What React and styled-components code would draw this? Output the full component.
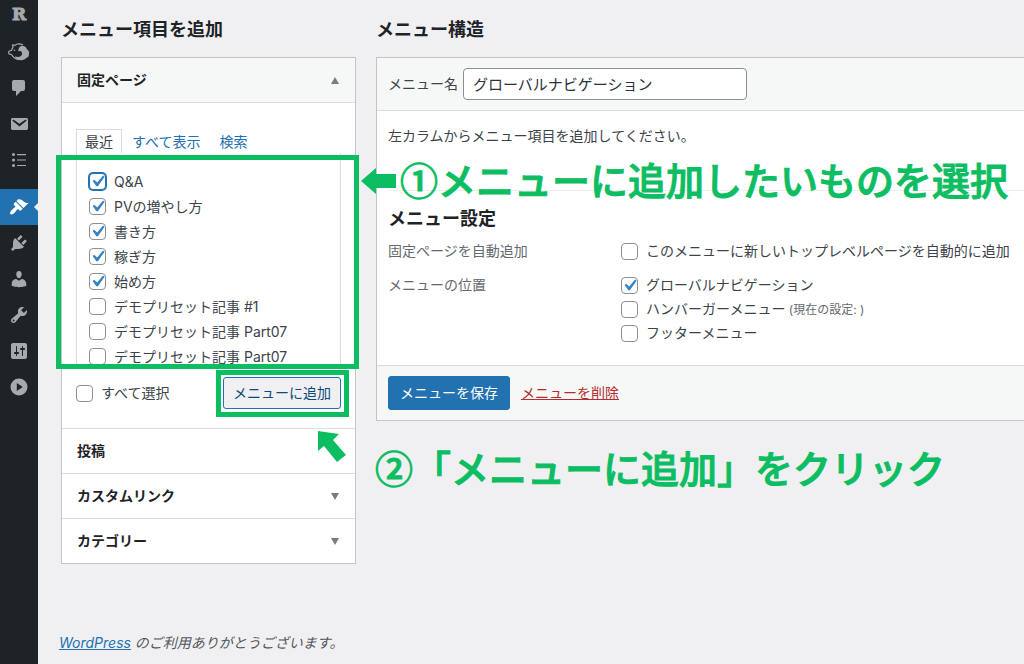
import React, { useState } from "react";
import styled, { createGlobalStyle, css } from "styled-components";

const GREEN = "#0dbd62";

const icons = {
  comments:
    "M5 2h9c1.1 0 2 .9 2 2v7c0 1.1-.9 2-2 2h-2l-5 5v-5H5c-1.1 0-2-.9-2-2V4c0-1.1.9-2 2-2z",
  mail: "M3.87 4h13.25C18.37 4 19 4.59 19 5.79v8.42c0 1.19-.63 1.79-1.88 1.79H3.87c-1.25 0-1.88-.6-1.88-1.79V5.79c0-1.2.63-1.79 1.88-1.79zm6.62 8.6l6.74-5.53c.24-.2.43-.66.13-1.07-.29-.41-.82-.42-1.17-.17l-5.7 3.86L4.8 5.83c-.35-.25-.88-.24-1.17.17-.3.41-.11.87.13 1.07z",
  list: "M4.500 3a1.500 1.500 0 1 1 0 3 1.500 1.500 0 0 1 0-3zM8 4h9v1.200H8zM4.500 8.500a1.500 1.500 0 1 1 0 3 1.500 1.500 0 0 1 0-3zM8 9.400h9v1.200H8zM4.500 14a1.500 1.500 0 1 1 0 3 1.500 1.500 0 0 1 0-3zM8 14.900h9v1.200H8z",
  appearance:
    "M14.48 11.06L7.41 3.99l1.5-1.5c.5-.56 2.3-.47 3.51.32 1.21.8 1.43 1.28 2.91 2.1 1.18.64 2.45 1.26 4.45.85zm-.71.71L6.7 4.7 4.93 6.47c-.39.39-.39 1.02 0 1.41l1.06 1.06c.39.39.39 1.03 0 1.42-.6.6-1.43 1.11-2.21 1.69-.35.26-.7.53-1.01.84C1.43 14.23.4 16.08 1.4 17.07c.99 1 2.84-.03 4.18-1.36.31-.31.58-.66.85-1.02.57-.78 1.08-1.61 1.69-2.21.39-.39 1.02-.39 1.41 0l1.06 1.06c.39.39 1.02.39 1.41 0z",
  plugins:
    "M13.11 4.36L9.87 7.6 8 5.73l3.24-3.24c.35-.34 1.05-.2 1.56.32.52.51.66 1.21.31 1.55zm-8 1.77l.91-1.12 9.01 9.01-1.19.84c-.71.71-2.63 1.16-3.82 1.16H6.14L4.9 17.26c-.59.59-1.54.59-2.12 0-.59-.58-.59-1.53 0-2.12l1.24-1.24v-3.88c0-1.13.4-3.19 1.09-3.89zm7.26 3.97l3.24-3.24c.34-.35 1.04-.21 1.55.31.52.51.66 1.21.31 1.55l-3.24 3.25z",
  users:
    "M10 9.25c-2.27 0-2.73-3.44-2.73-3.44C7 4.02 7.82 2 9.97 2c2.16 0 2.98 2.02 2.71 3.81 0 0-.41 3.44-2.68 3.44zm0 2.57L12.72 10c2.39 0 4.52 2.33 4.52 4.53v2.49s-3.65 1.13-7.24 1.13c-3.65 0-7.24-1.13-7.24-1.13v-2.49c0-2.25 1.94-4.48 4.47-4.48z",
  tools:
    "M16.68 9.77c-1.34 1.34-3.3 1.67-4.95.99l-5.41 6.52c-.99.99-2.59.99-3.58 0s-.99-2.59 0-3.57l6.52-5.42c-.68-1.65-.35-3.61.99-4.95 1.28-1.28 3.12-1.62 4.72-1.06l-2.89 2.89 2.82 2.82 2.86-2.87c.53 1.58.18 3.39-1.08 4.65zM3.81 16.21c.4.39 1.04.39 1.43 0 .4-.4.4-1.04 0-1.43-.39-.4-1.03-.4-1.43 0-.39.39-.39 1.03 0 1.43z",
  settings:
    "M18 16V4c0-1.1-.9-2-2-2H4c-1.1 0-2 .9-2 2v12c0 1.1.9 2 2 2h12c1.1 0 2-.9 2-2zM8 11h1c.55 0 1 .45 1 1s-.45 1-1 1H8v1.5c0 .28-.22.5-.5.5s-.5-.22-.5-.5V13H6c-.55 0-1-.45-1-1s.45-1 1-1h1V5.5c0-.28.22-.5.5-.5s.5.22.5.5V11zm5-2h-1c-.55 0-1-.45-1-1s.45-1 1-1h1V5.5c0-.28.22-.5.5-.5s.5.22.5.5V7h1c.55 0 1 .45 1 1s-.45 1-1 1h-1v5.5c0 .28-.22.5-.5.5s-.5-.22-.5-.5V9z",
  collapse: "M10 1.500a8.500 8.500 0 1 1 0 17 8.500 8.500 0 0 1 0-17zM7.800 6v8l6-4z",
};

const navItems = [
  { name: "comments", label: "コメント" },
  { name: "mail", label: "お問い合わせ" },
  { name: "list", label: "目次" },
  { name: "appearance", label: "外観", current: true },
  { name: "plugins", label: "プラグイン" },
  { name: "users", label: "ユーザー" },
  { name: "tools", label: "ツール" },
  { name: "settings", label: "設定" },
  { name: "collapse", label: "メニューを閉じる" },
];

const pages = [
  { id: 1, title: "Q&A", checked: true, focused: true },
  { id: 2, title: "PVの増やし方", checked: true },
  { id: 3, title: "書き方", checked: true },
  { id: 4, title: "稼ぎ方", checked: true },
  { id: 5, title: "始め方", checked: true },
  { id: 6, title: "デモプリセット記事 #1" },
  { id: 7, title: "デモプリセット記事 Part07" },
  { id: 8, title: "デモプリセット記事 Part07" },
];

function SeoPackIcon() {
  return (
    <svg width='22' height='20' viewBox='0 0 22 20' aria-hidden='true'>
      <path
        d='M15 3C12 1.400 8.500 1.800 6.800 3.400L4.600 2.800l.3 2.600C4.300 6.300 3.900 7.200 3.700 8.200L1 9.200c-.5.500-.4 2.200.1 2.700l2.700.9c1.300 2.700 3.900 4.400 7.200 4.800'
        fill='none'
        stroke='#a7aaad'
        strokeWidth='1.200'
        strokeLinejoin='round'
      />
      <circle cx='6.500' cy='8.300' r='0.800' fill='#a7aaad' />
      <path
        d='M10.500 7.200c.5-2.300 2.600-3.700 4.800-3.300 2.100.3 3.500 1.900 3.700 3.700 1.700.8 2.500 2.600 1.900 4.300.2 2-.9 3.600-2.700 4.200-1.700 2-4.300 2.600-6.600 1.800-2.400 0-4.200-1.600-4.600-3.700 1.800 1 4.500 1 6-.3 1.500-1.300 1.500-3.600-.1-4.600-.8-.5-1.700-.4-2.400.1-.3-.7-.3-1.500 0-2.200z'
        fill='#a7aaad'
      />
    </svg>
  );
}

function CheckItem({ id, label, note, defaultChecked, focused }) {
  return (
    <CheckRow htmlFor={id}>
      <Checkbox id={id} defaultChecked={defaultChecked} $focused={focused} />
      <span>
        {label}
        {note && <small> {note}</small>}
      </span>
    </CheckRow>
  );
}

function AccordionHead({ title, open, hideArrow }) {
  return (
    <SectionTitle>
      <SectionButton type='button' $open={open} aria-expanded={!!open}>
        {title}
        {!hideArrow && (
          <svg width='8' height='7' viewBox='0 0 8 7' aria-hidden='true'>
            <path d={open ? "M4 0l4 7H0z" : "M0 0h8L4 7z"} fill='#787c82' />
          </svg>
        )}
      </SectionButton>
    </SectionTitle>
  );
}

function Sidebar() {
  return (
    <Nav aria-label='メインメニュー'>
      <NavLogo href='#rinker'>R</NavLogo>
      <NavLink href='#seo' aria-label='SEO'>
        <SeoPackIcon />
      </NavLink>
      {navItems.map(({ name, label, current }) => (
        <NavLink
          key={name}
          href={`#${name}`}
          aria-label={label}
          $current={current}
        >
          <svg width='20' height='20' viewBox='0 0 20 20' aria-hidden='true'>
            <path d={icons[name]} fill='currentColor' fillRule='evenodd' />
          </svg>
        </NavLink>
      ))}
    </Nav>
  );
}

function AddItems() {
  return (
    <LeftColumn>
      <Heading>メニュー項目を追加</Heading>
      <Panel>
        <AccordionHead title='固定ページ' open />
        <SectionBody>
          <Tabs>
            <Tab href='#recent' $active>
              最近
            </Tab>
            <Tab href='#all'>すべて表示</Tab>
            <Tab href='#search'>検索</Tab>
          </Tabs>
          <PageList>
            {pages.map((page) => (
              <li key={page.id}>
                <CheckItem
                  id={`page-${page.id}`}
                  label={page.title}
                  defaultChecked={page.checked}
                  focused={page.focused}
                />
              </li>
            ))}
          </PageList>
          <ListActions>
            <CheckItem id='select-all' label='すべて選択' />
            <AddWrapper>
              <Button type='button'>メニューに追加</Button>
              <ButtonMark />
              <DiagonalArrow width='28' height='32' viewBox='0 0 28 32'>
                <path d='M0 0l21 3-6 6 13 15-9 7L6 15l-6 5z' fill={GREEN} />
              </DiagonalArrow>
            </AddWrapper>
          </ListActions>
        </SectionBody>
        <AccordionHead title='投稿' hideArrow />
        <AccordionHead title='カスタムリンク' />
        <AccordionHead title='カテゴリー' />
        <ListMark />
      </Panel>
    </LeftColumn>
  );
}

function MenuStructure() {
  const [name, setName] = useState("グローバルナビゲーション");

  return (
    <RightColumn>
      <Heading>メニュー構造</Heading>
      <MenuPanel>
        <PanelBar>
          <label htmlFor='menu-name'>メニュー名</label>
          <NameInput
            id='menu-name'
            value={name}
            onChange={(e) => setName(e.target.value)}
          />
        </PanelBar>
        <PanelBody>
          <p>左カラムからメニュー項目を追加してください。</p>
          <Settings>
            <Heading as='h3'>メニュー設定</Heading>
            <SettingRow role='group' aria-labelledby='auto-add-title'>
              <span id='auto-add-title'>固定ページを自動追加</span>
              <div>
                <CheckItem
                  id='auto-add'
                  label='このメニューに新しいトップレベルページを自動的に追加'
                />
              </div>
            </SettingRow>
            <SettingRow role='group' aria-labelledby='location-title'>
              <span id='location-title'>メニューの位置</span>
              <div>
                <CheckItem
                  id='location-global'
                  label='グローバルナビゲーション'
                  defaultChecked
                />
                <CheckItem
                  id='location-hamburger'
                  label='ハンバーガーメニュー'
                  note='(現在の設定: )'
                />
                <CheckItem id='location-footer' label='フッターメニュー' />
              </div>
            </SettingRow>
          </Settings>
        </PanelBody>
        <PanelBar $bottom>
          <Button type='button' $primary>
            メニューを保存
          </Button>
          <DeleteLink href='#delete'>メニューを削除</DeleteLink>
        </PanelBar>
        <StepOne>
          <svg width='35' height='26' viewBox='0 0 35 26' aria-hidden='true'>
            <path d='M0 13L15 0v6h20v14H15v6z' fill={GREEN} />
          </svg>
          ①メニューに追加したいものを選択
        </StepOne>
      </MenuPanel>
      <StepTwo>②「メニューに追加」をクリック</StepTwo>
    </RightColumn>
  );
}

function App() {
  return (
    <>
      <GlobalStyle />
      <Wrapper>
        <Sidebar />
        <Main>
          <Columns>
            <AddItems />
            <MenuStructure />
          </Columns>
          <Footer>
            <a href='#wordpress'>WordPress</a> のご利用ありがとうございます。
          </Footer>
        </Main>
      </Wrapper>
    </>
  );
}

const GlobalStyle = createGlobalStyle`
  * {
    box-sizing: border-box;
    margin: 0;
    padding: 0;
  }

  body {
    background: #f0f0f2;
    color: #3c434a;
    font-family: Inter, "Noto Sans CJK JP", sans-serif;
    font-size: 14px;
    line-height: 20px;
    overflow-x: hidden;
  }

  button,
  input {
    font-family: inherit;
  }
`;

const Wrapper = styled.div`
  display: flex;
  min-height: 100vh;
`;

const Nav = styled.nav`
  flex: none;
  width: 38px;
  background: #1d2327;
`;

const NavLink = styled.a`
  position: relative;
  display: flex;
  align-items: center;
  justify-content: center;
  height: 36px;
  color: #a7aaad;
  text-decoration: none;

  ${({ $current }) =>
    $current &&
    css`
      margin-top: 11px;
      background: #2271b1;
      color: white;

      &::after {
        content: "";
        position: absolute;
        right: 0;
        border: 4px solid transparent;
        border-right-color: #f0f0f2;
      }
    `}
`;

const NavLogo = styled(NavLink)`
  height: 28px;
  margin-bottom: 6px;
  font-family: "DejaVu Serif", serif;
  font-size: 17px;
  font-weight: bold;
  -webkit-text-stroke: 1px #a7aaad;
`;

const Main = styled.main`
  flex: 1;
  min-width: 0;
  display: flex;
  flex-direction: column;
  padding: 18px 0 11px 21px;
`;

const Columns = styled.div`
  display: flex;
  gap: 20px;
  margin-left: 2px;
`;

const LeftColumn = styled.section`
  flex: none;
  width: 295px;
`;

const RightColumn = styled.section`
  flex: 1;
  min-width: 0;
`;

const Heading = styled.h2`
  margin-bottom: 15px;
  color: #1d2327;
  font-size: 18px;
  font-weight: bold;
  line-height: 24px;
`;

const Panel = styled.div`
  position: relative;
  border: 1px solid #c3c4c7;
  background: white;
`;

const MenuPanel = styled(Panel)`
  border-right: none;
`;

const SectionTitle = styled.h3`
  & + & {
    border-top: 1px solid #dcdcde;
  }
`;

const SectionButton = styled.button`
  display: flex;
  align-items: center;
  justify-content: space-between;
  width: 100%;
  height: 44px;
  padding: 0 16px 3px 15px;
  border: none;
  background: ${({ $open }) => ($open ? "#f6f7f7" : "white")};
  color: #1d2327;
  font-size: 14px;
  font-weight: bold;
  cursor: pointer;

  svg {
    margin-top: 4px;
  }
`;

const SectionBody = styled.div`
  padding: 26px 14px 19px;
  border-top: 1px solid #dcdcde;
  border-bottom: 1px solid #dcdcde;
`;

const Tabs = styled.div`
  display: flex;
  gap: 1px;
`;

const Tab = styled.a`
  height: 24px;
  padding: 2px 8px;
  border: 1px solid transparent;
  border-bottom: none;
  color: #2271b1;
  text-decoration: none;

  ${({ $active }) =>
    $active &&
    css`
      border-color: #dcdcde;
      color: #3c434a;
    `}
`;

const PageList = styled.ul`
  height: 213px;
  padding: 16px 12px 0;
  border: 1px solid #dcdcde;
  border-top: none;
  list-style: none;
  overflow: hidden;

  label {
    height: 25px;
  }
`;

const CheckRow = styled.label`
  display: flex;
  align-items: center;
  gap: 8px;
  height: 24px;
  white-space: nowrap;

  small {
    color: #646970;
    font-size: 12px;
  }
`;

const Checkbox = styled.input.attrs({ type: "checkbox" })`
  appearance: none;
  flex: none;
  width: 17px;
  height: 17px;
  border: 1px solid #8c8f94;
  border-radius: 4px;
  background: white center / 23px no-repeat;

  &:checked {
    background-image: url("data:image/svg+xml,%3Csvg xmlns='http://www.w3.org/2000/svg' viewBox='0 0 20 20'%3E%3Cpath d='M14.830 4.890l1.340.940-5.810 8.380H9.020L5.780 9.670l1.340-1.250 2.570 2.400z' fill='%233582c4'/%3E%3C/svg%3E");
  }

  ${({ $focused }) =>
    $focused &&
    css`
      border-color: #2271b1;
      box-shadow: 0 0 0 1px #2271b1;
    `}
`;

const ListActions = styled.div`
  display: flex;
  align-items: center;
  justify-content: space-between;
  margin-top: 11px;
`;

const AddWrapper = styled.div`
  position: relative;
`;

const Button = styled.button`
  height: 32px;
  padding: 0 9px 2px;
  border: 1px solid #2271b1;
  border-radius: 3px;
  background: #f0f0f3;
  color: #0a4b78;
  font-size: 14px;
  cursor: pointer;

  ${({ $primary }) =>
    $primary &&
    css`
      height: 34px;
      padding: 0 11px 2px;
      background: #2271b1;
      color: white;
    `}
`;

const PanelBar = styled.div`
  display: flex;
  align-items: center;
  gap: ${({ $bottom }) => ($bottom ? "11px" : "5px")};
  padding: 10px 11px;
  border: 0 solid #dcdcde;
  border-width: ${({ $bottom }) => ($bottom ? "1px 0 0" : "0 0 1px")};
  background: #f6f7f7;
`;

const NameInput = styled.input`
  width: 284px;
  height: 32px;
  padding: 0 9px 2px;
  border: 1px solid #8c8f94;
  border-radius: 4px;
  background: white;
  color: #2c3338;
  font-size: 15px;
`;

const PanelBody = styled.div`
  padding: 15px 0 20px 11px;
`;

const Settings = styled.div`
  margin-top: 44px;
  padding-top: 16px;
  border-top: 1px solid #eeeeee;

  ${Heading} {
    margin-bottom: 8px;
  }
`;

const SettingRow = styled.div`
  display: grid;
  grid-template-columns: 233px 1fr;
  line-height: 24px;

  & + & {
    margin-top: 10px;
  }

  > span {
    color: #646970;
  }
`;

const DeleteLink = styled.a`
  color: #b32d2e;
`;

const Footer = styled.footer`
  margin-top: auto;
  color: #50575e;
  font-style: italic;

  a {
    color: #2271b1;
  }
`;

/* green guide marks drawn over the screen */
const Mark = styled.div`
  position: absolute;
  border: 5px solid ${GREEN};
  pointer-events: none;
`;

const ListMark = styled(Mark)`
  top: 97px;
  left: -6px;
  right: -4px;
  height: 214px;
`;

const ButtonMark = styled(Mark)`
  inset: -7px -8px -8px -7px;
`;

const DiagonalArrow = styled.svg`
  position: absolute;
  top: 54px;
  right: -5px;
`;

const Step = styled.p`
  position: absolute;
  display: flex;
  align-items: center;
  color: ${GREEN};
  font-family: "Noto Sans CJK JP", sans-serif;
  font-size: 38px;
  font-weight: 500;
  line-height: 48px;
  white-space: nowrap;
  pointer-events: none;
  -webkit-text-stroke: 1px ${GREEN};
  stroke-linejoin: round;

  svg {
    margin-top: 4px;
  }
`;

const StepOne = styled(Step)`
  top: 97px;
  left: -16px;
  gap: 4px;
`;

const StepTwo = styled(Step)`
  margin: 22px 0 0 -1px;
`;

export default App;
